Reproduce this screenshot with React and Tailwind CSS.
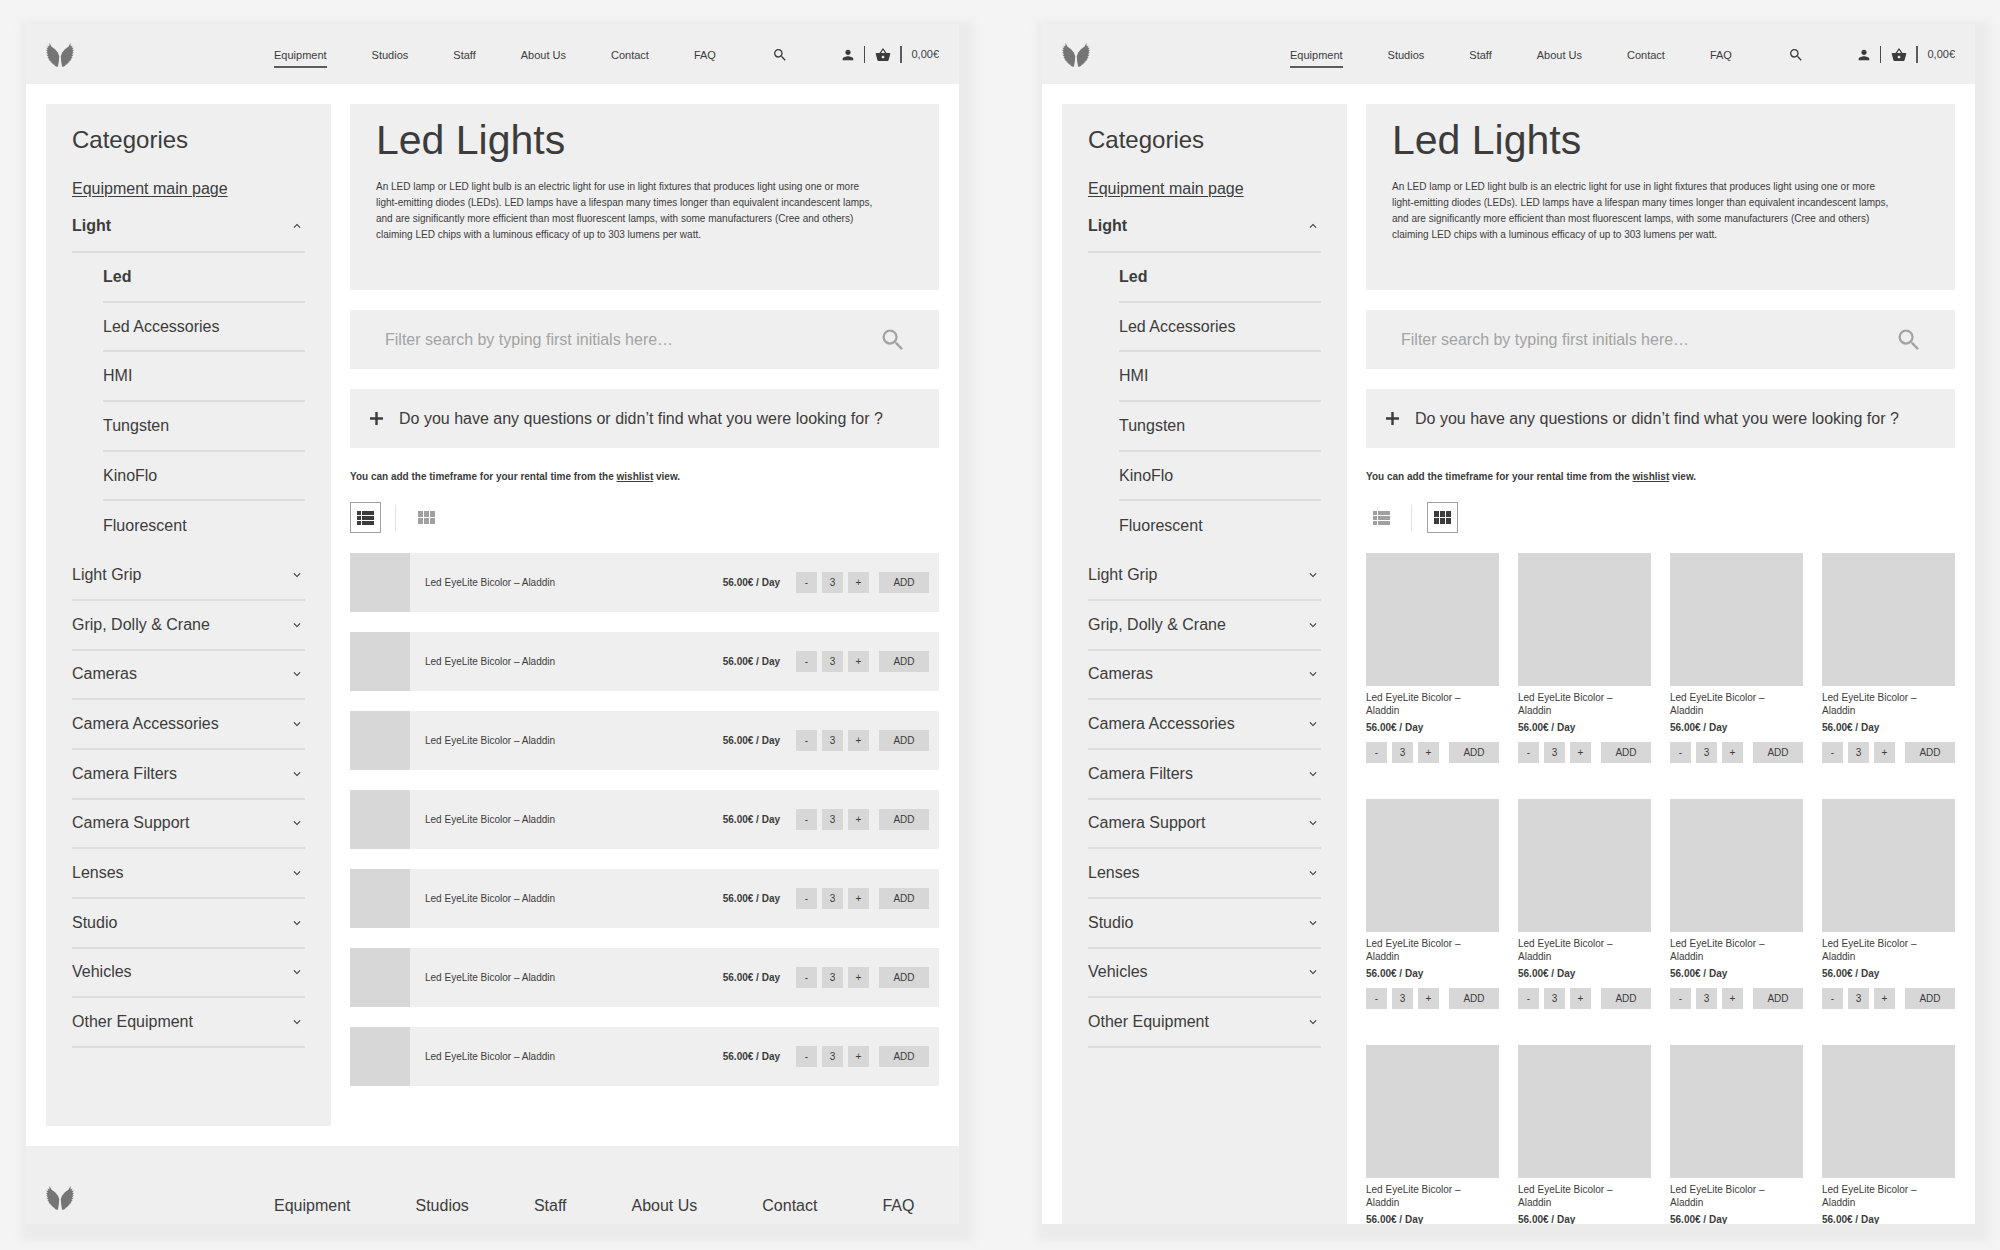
import React, { useState } from "react";
import {
    MdKeyboardArrowDown,
    MdKeyboardArrowUp,
    MdPerson,
    MdSearch,
    MdShoppingBasket,
} from "react-icons/md";

const NAV = ["Equipment", "Studios", "Staff", "About Us", "Contact", "FAQ"];

const LIGHTS = ["Led", "Led Accessories", "HMI", "Tungsten", "KinoFlo", "Fluorescent"];

const CATEGORIES = [
    "Light Grip",
    "Grip, Dolly & Crane",
    "Cameras",
    "Camera Accessories",
    "Camera Filters",
    "Camera Support",
    "Lenses",
    "Studio",
    "Vehicles",
    "Other Equipment",
];

const makeProducts = (count) =>
    Array.from({ length: count }, (_, i) => ({
        id: i + 1,
        name: "Led EyeLite Bicolor – Aladdin",
        price: "56.00€ / Day",
    }));

function Logo() {
    const wing =
        "M11.8 24 L12.9 18 L13.2 13 L11.8 9.6 L9 6.2 L5.4 3.4 L3.6 0 L3.2 3.4 L1.4 2.4 L2.4 5 L0.2 4.6 L1.8 7 L0 7 L1.8 9.2 L0.2 9.6 L2 11.6 L0.6 12.2 L2.6 13.8 L1.4 14.8 L3.4 16 L2.6 17 L4.8 18 L4.4 19 L6.4 20 L6.4 21 L8.4 21.8 L9 23 Z";
    return (
        <svg viewBox="0 0 28 24" className="w-7 h-6 fill-[#757575]" aria-hidden="true">
            <path d={wing} />
            <path d={wing} transform="translate(28 0) scale(-1 1)" />
        </svg>
    );
}

function ListIcon() {
    return (
        <svg viewBox="0 0 17 14" className="w-[17px] h-[14px] fill-current" aria-hidden="true">
            <path d="M0 0h4v4H0zM5 0h12v4H5zM0 5h4v4H0zM5 5h12v4H5zM0 10h4v4H0zM5 10h12v4H5z" />
        </svg>
    );
}

function GridIcon() {
    return (
        <svg viewBox="0 0 17 13" className="w-[17px] h-[13px] fill-current" aria-hidden="true">
            <path d="M0 0h5v6H0zM6 0h5v6H6zM12 0h5v6h-5zM0 7h5v6H0zM6 7h5v6H6zM12 7h5v6h-5z" />
        </svg>
    );
}

function Header() {
    return (
        <header className="flex items-center h-15 shrink-0 px-5 pt-px bg-[#efefef] text-[11px]">
            <a href="#home" aria-label="Home" className="w-[228px]">
                <Logo />
            </a>
            <nav className="flex gap-[45px] pt-px">
                {NAV.map((item, i) => (
                    <a
                        key={item}
                        href={"#" + item}
                        className={
                            i === 0
                                ? "pt-[5px] pb-[3px] border-b-2 border-[#5c5c5c]"
                                : "pt-[5px] pb-[3px] border-b-2 border-transparent"
                        }
                    >
                        {item}
                    </a>
                ))}
            </nav>
            <button type="button" aria-label="Search" className="ml-auto">
                <MdSearch size={16} />
            </button>
            <div className="flex items-center ml-[52px]">
                <a href="#account" aria-label="Account">
                    <MdPerson size={16} />
                </a>
                <span className="w-px h-[17px] ml-2 mr-[10px] bg-[#4a4a4a]" />
                <a href="#basket" aria-label="Basket">
                    <MdShoppingBasket size={16} />
                </a>
                <span className="w-0.5 h-[17px] mx-[9px] bg-[#5c5c5c]" />
                <span>0,00€</span>
            </div>
        </header>
    );
}

function Sidebar() {
    return (
        <aside className="w-[285px] shrink-0 pt-5 px-[26px] bg-[#efefef]">
            <h2 className="text-2xl leading-8">Categories</h2>
            <a href="#equipment" className="block mt-[21px] leading-6 underline underline-offset-2">
                Equipment main page
            </a>
            <button
                type="button"
                aria-expanded="true"
                className="flex items-center justify-between w-full h-[52px] pr-px border-b-2 border-[#dddddd] font-bold"
            >
                Light
                <MdKeyboardArrowUp size={14} />
            </button>
            <ul className="grid auto-rows-fr min-h-[795px]">
                {LIGHTS.map((item, i) => (
                    <li
                        key={item}
                        className={
                            i === LIGHTS.length - 1
                                ? "flex items-center ml-[31px]"
                                : "flex items-center ml-[31px] border-b-2 border-[#dddddd]"
                        }
                    >
                        <a href={"#" + item} className={i === 0 ? "font-bold" : ""}>
                            {item}
                        </a>
                    </li>
                ))}
                {CATEGORIES.map((item) => (
                    <li key={item} className="flex border-b-2 border-[#dddddd]">
                        <button
                            type="button"
                            aria-expanded="false"
                            className="flex items-center justify-between w-full pr-px text-left"
                        >
                            {item}
                            <MdKeyboardArrowDown size={14} />
                        </button>
                    </li>
                ))}
            </ul>
        </aside>
    );
}

function AddToCart() {
    const [amount, setAmount] = useState(3);
    const box = "size-[21px] bg-[#d7d7d7] text-center";

    return (
        <form className="flex grow justify-between gap-[10px]" onSubmit={(e) => e.preventDefault()}>
            <div className="flex gap-[5px]">
                <button
                    type="button"
                    aria-label="Less"
                    className={box}
                    onClick={() => setAmount(Math.max(1, amount - 1))}
                >
                    -
                </button>
                <input
                    type="text"
                    aria-label="Amount"
                    className={box}
                    value={amount}
                    onChange={(e) => setAmount(Number(e.target.value) || 1)}
                />
                <button
                    type="button"
                    aria-label="More"
                    className={box}
                    onClick={() => setAmount(amount + 1)}
                >
                    +
                </button>
            </div>
            <button type="submit" className="w-[50px] h-[21px] bg-[#d7d7d7]">
                ADD
            </button>
        </form>
    );
}

function ProductList({ products }) {
    return (
        <ul className="flex flex-col gap-5 text-[10px]">
            {products.map((p) => (
                <li key={p.id} className="flex items-center h-[59px] pr-[10px] bg-[#efefef]">
                    <div className="w-[60px] h-full bg-[#d7d7d7]" />
                    <span className="ml-[15px]">{p.name}</span>
                    <b className="ml-auto mr-4">{p.price}</b>
                    <div className="flex">
                        <AddToCart />
                    </div>
                </li>
            ))}
        </ul>
    );
}

function ProductGrid({ products }) {
    return (
        <ul className="grid grid-cols-4 gap-x-[19px] gap-y-9 text-[10px] leading-[13px]">
            {products.map((p) => (
                <li key={p.id}>
                    <div className="aspect-square bg-[#d7d7d7]" />
                    <p className="mt-[5px] pr-6">{p.name}</p>
                    <b className="block mt-1 mb-2">{p.price}</b>
                    <div className="flex">
                        <AddToCart />
                    </div>
                </li>
            ))}
        </ul>
    );
}

function ViewToggle({ view, setView }) {
    const active = "flex items-center justify-center size-[31px] border border-[#a0a0a0]";
    const idle = "flex items-center justify-center size-[31px] text-[#a0a0a0]";

    return (
        <div className="flex items-center">
            <button
                type="button"
                aria-label="List view"
                className={view === "list" ? active : idle}
                onClick={() => setView("list")}
            >
                <ListIcon />
            </button>
            <span className="w-px h-[26px] ml-[14px] mr-[15px] bg-[#e2e2e2]" />
            <button
                type="button"
                aria-label="Grid view"
                className={view === "grid" ? active : idle}
                onClick={() => setView("grid")}
            >
                <GridIcon />
            </button>
        </div>
    );
}

function Footer() {
    return (
        <footer className="flex items-start grow px-5 pt-10 bg-[#efefef]">
            <a href="#home" aria-label="Home" className="w-[228px]">
                <Logo />
            </a>
            <nav className="flex gap-[65px] pt-2">
                {NAV.map((item) => (
                    <a key={item} href={"#" + item} className="whitespace-nowrap">
                        {item}
                    </a>
                ))}
            </nav>
        </footer>
    );
}

function EquipmentPage({ initialView, products, withFooter }) {
    const [view, setView] = useState(initialView);
    const [filter, setFilter] = useState("");

    const shown = products.filter((p) => p.name.toLowerCase().startsWith(filter.toLowerCase()));

    return (
        <div className="flex flex-col flex-1 min-w-0 overflow-hidden bg-white shadow-[5px_7px_8px_10px_#ebebeb]">
            <Header />
            <div className="flex shrink-0 gap-[19px] p-5">
                <Sidebar />
                <main className="flex-1 min-w-0 pb-10">
                    <section className="h-[186px] px-[26px] pt-3 bg-[#efefef]">
                        <h1 className="text-[41px] leading-[48px] font-medium">Led Lights</h1>
                        <p className="mt-[15px] max-w-[530px] text-[10px] leading-4">
                            An LED lamp or LED light bulb is an electric light for use in light
                            fixtures that produces light using one or more
                            <br />
                            light-emitting diodes (LEDs). LED lamps have a lifespan many times longer
                            than equivalent incandescent lamps,
                            <br />
                            and are significantly more efficient than most fluorescent lamps, with
                            some manufacturers (Cree and others)
                            <br />
                            claiming LED chips with a luminous efficacy of up to 303 lumens per watt.
                        </p>
                    </section>

                    <label className="flex items-center h-[59px] mt-5 pl-[35px] pr-8 bg-[#efefef]">
                        <input
                            type="text"
                            aria-label="Filter search"
                            placeholder="Filter search by typing first initials here…"
                            value={filter}
                            onChange={(e) => setFilter(e.target.value)}
                            className="flex-1 min-w-0 outline-none placeholder:text-[#a3a3a3]"
                        />
                        <MdSearch size={28} className="text-[#a3a3a3]" />
                    </label>

                    <button
                        type="button"
                        className="flex items-center gap-4 w-full h-[59px] mt-5 px-5 bg-[#efefef] text-left"
                    >
                        <svg viewBox="0 0 13 13" className="size-[13px] fill-current" aria-hidden="true">
                            <path d="M5.3 0h2.4v5.3H13v2.4H7.7V13H5.3V7.7H0V5.3h5.3z" />
                        </svg>
                        Do you have any questions or didn’t find what you were looking for ?
                    </button>

                    <p className="mt-[21px] mb-[17px] text-[10px] leading-4 font-bold">
                        You can add the timeframe for your rental time from the{" "}
                        <a href="#wishlist" className="underline">
                            wishlist
                        </a>{" "}
                        view.
                    </p>

                    <ViewToggle view={view} setView={setView} />

                    <div className="mt-5">
                        {view === "list" ? (
                            <ProductList products={shown} />
                        ) : (
                            <ProductGrid products={shown} />
                        )}
                    </div>
                </main>
            </div>
            {withFooter && <Footer />}
        </div>
    );
}

export default function App() {
    return (
        <div className="flex gap-[83px] h-screen overflow-hidden pt-6 pb-[26px] pl-[26px] pr-[25px] bg-[#f4f4f4] text-base text-[#3c3c3c] font-['Liberation_Sans',Arial,sans-serif]">
            <EquipmentPage initialView="list" products={makeProducts(7)} withFooter />
            <EquipmentPage initialView="grid" products={makeProducts(12)} />
        </div>
    );
}
